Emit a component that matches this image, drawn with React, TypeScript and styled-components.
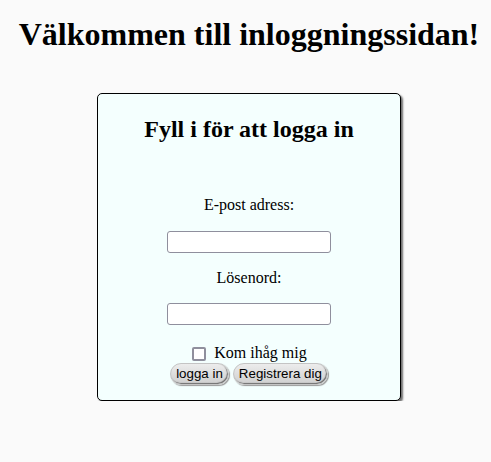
import React, { useState } from "react";
import styled, { createGlobalStyle } from "styled-components";

const GlobalStyle = createGlobalStyle`
  html, body {
    margin: 0;
    padding: 0;
    background: #fafafa;
  }
  body {
    font-family: "Liberation Serif", "Times New Roman", serif;
    color: #000;
  }
`;

const Page = styled.div`
  display: flex;
  flex-direction: column;
  align-items: center;
  padding: 16px 0 0 7px;
`;

const Title = styled.h1`
  margin: 0 0 40px;
  font-size: 32px;
  font-weight: bold;
  line-height: 36.8px;
  text-align: center;
`;

const Card = styled.form`
  box-sizing: border-box;
  width: 304px;
  display: flex;
  flex-direction: column;
  align-items: center;
  background: #f4fffe;
  border: 1px solid #000;
  border-radius: 5px;
  box-shadow: 2px 2px 2px #6f6f6f;
  padding: 22px 0 15px;
`;

const CardTitle = styled.h2`
  margin: 0 0 53px;
  font-size: 24px;
  font-weight: bold;
  line-height: 27.6px;
`;

const Label = styled.label`
  display: block;
  font-size: 16px;
  line-height: 18.4px;
  margin-bottom: 16px;
`;

const Input = styled.input`
  box-sizing: border-box;
  width: 164px;
  height: 22px;
  margin: 0 0 16px;
  padding: 1px 3px;
  background: #fff;
  border: 1px solid #8f8f9d;
  border-radius: 3px;
  font: 13px "Liberation Sans", Arial, sans-serif;
  outline: none;
`;

const RememberRow = styled.label`
  display: flex;
  align-items: center;
  gap: 8px;
  margin: 3px 0 0 1px;
  font-size: 16px;
  line-height: 18.4px;
`;

const Check = styled.input`
  appearance: none;
  box-sizing: border-box;
  width: 14px;
  height: 14px;
  margin: 1px 0 0;
  border: 2px solid #8f8f9d;
  border-radius: 2px;
  background: #fff;

  &:checked {
    background: #0060df;
    border-color: #0060df;
  }
`;

const Buttons = styled.div`
  display: flex;
  gap: 4px;
  margin-top: 0;
`;

const PillButton = styled.button`
  height: 22px;
  padding: 0 5px;
  border: 1px solid #c4c4c4;
  border-radius: 11px;
  background: linear-gradient(#ececec, #cfcfcf);
  box-shadow: inset -1px -1px 1px #6e6e6e, 1px 1px 1px #9a9a9a;
  font: 13.33px "Liberation Sans", Arial, sans-serif;
  color: #000;
  cursor: pointer;
`;

const App = () => {
  const [email, setEmail] = useState("");
  const [password, setPassword] = useState("");
  const [remember, setRemember] = useState(false);

  return (
    <>
      <GlobalStyle />
      <Page>
        <Title>Välkommen till inloggningssidan!</Title>
        <Card onSubmit={(e) => e.preventDefault()}>
          <CardTitle>Fyll i för att logga in</CardTitle>
          <Label htmlFor='email'>E-post adress:</Label>
          <Input
            type='email'
            id='email'
            value={email}
            onChange={(e) => setEmail(e.target.value)}
          />
          <Label htmlFor='password'>Lösenord:</Label>
          <Input
            type='password'
            id='password'
            value={password}
            onChange={(e) => setPassword(e.target.value)}
          />
          <RememberRow>
            <Check
              type='checkbox'
              checked={remember}
              onChange={(e) => setRemember(e.target.checked)}
            />
            Kom ihåg mig
          </RememberRow>
          <Buttons>
            <PillButton type='submit'>logga in</PillButton>
            <PillButton type='button'>Registrera dig</PillButton>
          </Buttons>
        </Card>
      </Page>
    </>
  );
};

export default App;
